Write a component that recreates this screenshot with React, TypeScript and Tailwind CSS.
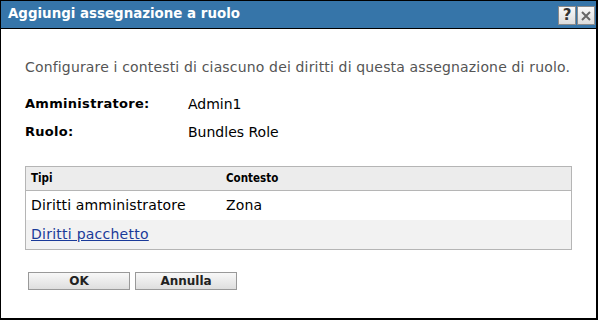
import React from 'react'

const font = { fontFamily: '"DejaVu Sans", Verdana, sans-serif' }
const condensed = { fontFamily: '"DejaVu Sans Condensed", "DejaVu Sans", sans-serif' }

function TitleButton({ children }: { children: React.ReactNode }) {
  return (
    <div className="flex h-[19px] w-[18px] items-center justify-center border border-[#8a8a8a] bg-gradient-to-b from-[#fafafa] to-[#dcdcdc] text-[15px] font-bold leading-none text-[#333]">
      {children}
    </div>
  )
}

function DialogButton({ label }: { label: string }) {
  return (
    <button className="h-[18px] w-[102px] border border-[#999] bg-gradient-to-b from-[#f8f8f8] to-[#dedede] text-[12px] font-bold leading-none text-[#222]">
      {label}
    </button>
  )
}

export default function App() {
  return (
    <div
      className="flex h-[320px] w-[598px] flex-col border-t border-l border-r-2 border-b-2 border-black bg-white"
      style={font}
    >
      {/* Title bar */}
      <div className="flex h-[28px] items-center justify-between border-b border-black bg-[#3675a9] pr-[1px] pl-[7px]">
        <span className="text-[13.4px] font-bold text-white">Aggiungi assegnazione a ruolo</span>
        <div className="flex gap-[1px] pt-[2px]">
          <TitleButton>?</TitleButton>
          <TitleButton>
            <svg width="12" height="12" viewBox="0 0 12 12">
              <path d="M2 2 L10 10 M10 2 L2 10" stroke="#666" strokeWidth="2" />
            </svg>
          </TitleButton>
        </div>
      </div>

      <div className="flex flex-col px-[24px]">
        <p className="mt-[28px] text-[14px] tracking-[0.16px] text-[#555]">
          Configurare i contesti di ciascuno dei diritti di questa assegnazione di ruolo.
        </p>

        <div className="mt-[16px] grid grid-cols-[163px_1fr] gap-y-[7px] text-black">
          <span className="text-[13px] font-bold tracking-[0.3px]">Amministratore:</span>
          <span className="text-[14px]">Admin1</span>
          <span className="text-[13px] font-bold tracking-[0.3px]">Ruolo:</span>
          <span className="text-[14px]">Bundles Role</span>
        </div>

        <div className="mt-[23px] w-[547px] border border-[#b5b5b5]">
          <div
            className="flex h-[24px] items-center border-b border-[#b5b5b5] bg-[#ececec] text-[11.5px] font-bold text-black"
            style={condensed}
          >
            <span className="w-[200px] pl-[5px]">Tipi</span>
            <span>Contesto</span>
          </div>
          <div className="flex h-[29px] items-center bg-white text-[14px] tracking-[0.15px] text-black">
            <span className="w-[200px] pl-[5px]">Diritti amministratore</span>
            <span>Zona</span>
          </div>
          <div className="flex h-[29px] items-center bg-[#f2f2f2] text-[14px] tracking-[0.25px]">
            <a href="#" className="pl-[5px] text-[#1a3a99] underline">
              Diritti pacchetto
            </a>
          </div>
        </div>

        <div className="mt-[22px] flex gap-[5px] pl-[3px]">
          <DialogButton label="OK" />
          <DialogButton label="Annulla" />
        </div>
      </div>
    </div>
  )
}
